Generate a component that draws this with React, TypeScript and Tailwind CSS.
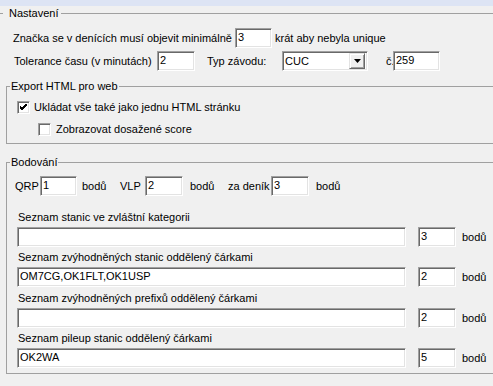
import React from "react";

const sunken =
  "bg-white border border-t-[#a0a0a0] border-l-[#a0a0a0] border-r-white border-b-white shadow-[inset_1px_1px_0_#696969,inset_-1px_-1px_0_#e3e3e3]";

const Field = ({ w, value = "" }: { w: string; value?: string }) => (
  <div className={`${sunken} ${w} h-[20px] shrink-0 pl-[2px] pt-[2px] leading-[13px]`}>{value}</div>
);

const Check = ({ checked }: { checked?: boolean }) => (
  <div className={`${sunken} w-[13px] h-[13px] shrink-0 flex items-center justify-center`}>
    {checked && (
      <svg width="7" height="7" viewBox="0 0 7 7">
        <path d="M0 2 L2 4 L7 -1 M0 3 L2 5 L7 0 M0 4 L2 6 L7 1" stroke="#000" strokeWidth="1" fill="none" shapeRendering="crispEdges" />
      </svg>
    )}
  </div>
);

const Select = () => (
  <div className={`${sunken} w-[86px] h-[20px] shrink-0 flex items-center justify-between pl-[2px] pr-[2px]`}>
    <span className="leading-[13px]">CUC</span>
    <div className="w-[16px] h-[16px] bg-[#f0f0f0] border border-t-[#e3e3e3] border-l-[#e3e3e3] border-r-[#696969] border-b-[#696969] shadow-[inset_1px_1px_0_#ffffff,inset_-1px_-1px_0_#a0a0a0] flex items-center justify-center">
      <svg width="7" height="4" viewBox="0 0 7 4">
        <path d="M0 0 H7 L3.5 4 Z" fill="#000" />
      </svg>
    </div>
  </div>
);

const Label = ({ w, children }: { w: string; children: React.ReactNode }) => (
  <span className={`${w} shrink-0 whitespace-nowrap`}>{children}</span>
);

const ListRow = ({ title, value, points }: { title: string; value?: string; points: string }) => (
  <>
    <div className="pl-[11px] h-[13px] whitespace-nowrap">{title}</div>
    <div className="flex items-center pl-[10px] mt-[3px]">
      <Field w="w-[389px]" value={value} />
      <div className="ml-[12px]">
        <Field w="w-[38px]" value={points} />
      </div>
      <span className="ml-[6px]">bodů</span>
    </div>
  </>
);

export default function App() {
  return (
    <div
      className="w-[493px] h-[386px] overflow-hidden bg-[#f0f0f0] text-black text-[11px] leading-[13px]"
      style={{ fontFamily: '"Liberation Sans", Arial, sans-serif' }}
    >
      <div className="h-[6px] bg-[#dde4f4]" />
      <fieldset className="ml-[-2px] w-[520px] h-[420px] mt-[1px] border border-[#a0a0a0] p-0 m-0">
        <legend className="ml-[4px] pl-[6px] pr-[2px] leading-[13px]">Nastavení</legend>

        <div className="flex items-center pl-[14px] mt-[8px]">
          <Label w="w-[222px]">Značka se v denících musí objevit minimálně</Label>
          <Field w="w-[37px]" value="3" />
          <span className="ml-[3px]">krát aby nebyla unique</span>
        </div>

        <div className="flex items-center pl-[15px] mt-[3px]">
          <Label w="w-[143px]">Tolerance času (v minutách)</Label>
          <Field w="w-[38px]" value="2" />
          <span className="ml-[12px] w-[75px] shrink-0">Typ závodu:</span>
          <Select />
          <span className="ml-[18px] w-[7px] shrink-0">č.</span>
          <Field w="w-[47px]" value="259" />
        </div>

        <fieldset className="ml-[7px] mt-[9px] w-[520px] border border-[#a0a0a0] p-0 pb-[7px]">
          <legend className="ml-[3px] px-[1px] leading-[13px]">Export HTML pro web</legend>
          <div className="flex items-center pl-[10px] mt-[8px] h-[13px]">
            <Check checked />
            <span className="ml-[4px]">Ukládat vše také jako jednu HTML stránku</span>
          </div>
          <div className="flex items-center pl-[31px] mt-[9px] h-[13px]">
            <Check />
            <span className="ml-[5px]">Zobrazovat dosažené score</span>
          </div>
        </fieldset>

        <fieldset className="ml-[7px] mt-[12px] w-[520px] border border-[#a0a0a0] p-0 pb-[5px]">
          <legend className="ml-[3px] px-[1px] leading-[13px]">Bodování</legend>
          <div className="flex items-center pl-[8px] mt-[7px]">
            <Label w="w-[25px]">QRP</Label>
            <Field w="w-[37px]" value="1" />
            <span className="ml-[5px] w-[38px] shrink-0">bodů</span>
            <Label w="w-[25px]">VLP</Label>
            <Field w="w-[38px]" value="2" />
            <span className="ml-[7px] w-[38px] shrink-0">bodů</span>
            <Label w="w-[43px]">za deník</Label>
            <Field w="w-[38px]" value="3" />
            <span className="ml-[7px]">bodů</span>
          </div>

          <div className="mt-[15px]">
            <ListRow title="Seznam stanic ve zvláštní kategorii" points="3" />
          </div>
          <div className="mt-[4px]">
            <ListRow title="Seznam zvýhodněných stanic oddělený čárkami" value="OM7CG,OK1FLT,OK1USP" points="2" />
          </div>
          <div className="mt-[5px]">
            <ListRow title="Seznam zvýhodněných prefixů oddělený čárkami" points="2" />
          </div>
          <div className="mt-[4px]">
            <ListRow title="Seznam pileup stanic oddělený čárkami" value="OK2WA" points="5" />
          </div>
        </fieldset>
      </fieldset>
    </div>
  );
}
